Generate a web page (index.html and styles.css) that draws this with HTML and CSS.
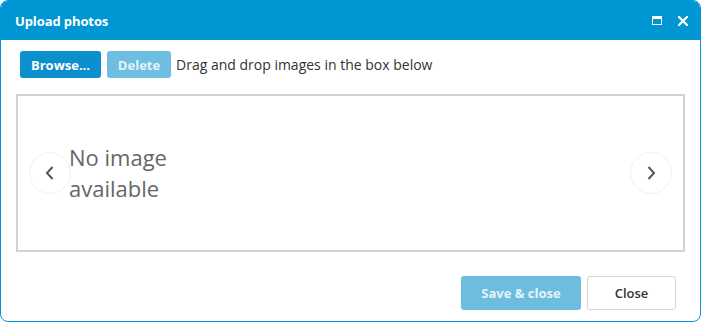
FILE: index.html
```html
<!DOCTYPE html>
<html lang="en">
<head>
    <meta charset="UTF-8">
    <title>Upload photos</title>
    <link rel="stylesheet" href="styles.css">
</head>
<body>
    <div class="dialog">
        <div class="dialog-header">
            <span class="dialog-title">Upload photos</span>
            <div class="dialog-actions">
                <span class="icon-max"></span>
                <svg class="icon-close" width="10" height="10" viewBox="0 0 10 10">
                    <path d="M1 1 L9 9 M9 1 L1 9" stroke="#fff" stroke-width="2.2" stroke-linecap="square"/>
                </svg>
            </div>
        </div>

        <div class="toolbar">
            <button class="btn btn-primary">Browse...</button>
            <button class="btn btn-disabled">Delete</button>
            <span class="hint">Drag and drop images in the box below</span>
        </div>

        <div class="dropzone">
            <div class="nav-circle">
                <svg width="12" height="16" viewBox="0 0 12 16">
                    <path d="M8.5 2 L3 8 L8.5 14" fill="none" stroke="#555" stroke-width="2"/>
                </svg>
            </div>
            <div class="no-image">No image<br>available</div>
            <div class="nav-circle">
                <svg width="12" height="16" viewBox="0 0 12 16">
                    <path d="M3.5 2 L9 8 L3.5 14" fill="none" stroke="#555" stroke-width="2"/>
                </svg>
            </div>
        </div>

        <div class="footer">
            <button class="btn btn-save">Save &amp; close</button>
            <button class="btn btn-close">Close</button>
        </div>
    </div>
</body>
</html>
```

FILE: styles.css
```css
body {
    margin: 0;
    font-family: "Open Sans", Arial, sans-serif;
    background: #fff;
}

.dialog {
    box-sizing: border-box;
    width: 701px;
    height: 322px;
    border: 1px solid #0095d3;
    border-radius: 8px;
    overflow: hidden;
    display: flex;
    flex-direction: column;
}

.dialog-header {
    height: 39px;
    background: #0095d3;
    color: #fff;
    display: flex;
    align-items: center;
    justify-content: space-between;
    padding: 0 12px 0 14px;
}

.dialog-title {
    font-size: 13px;
    font-weight: 700;
    letter-spacing: -0.1px;
}

.dialog-actions {
    display: flex;
    align-items: center;
    gap: 16px;
}

.icon-max {
    box-sizing: border-box;
    width: 10px;
    height: 9px;
    border: 1.5px solid #fff;
    border-top-width: 3px;
}

.toolbar {
    display: flex;
    align-items: center;
    gap: 6px;
    padding: 11px 0 0 19px;
}

.btn {
    font-family: "Open Sans", Arial, sans-serif;
    font-size: 13px;
    font-weight: 700;
    border: none;
    border-radius: 3px;
    padding: 0;
    height: 27px;
    cursor: pointer;
}

.btn-primary {
    width: 81px;
    background: #0b8fcd;
    color: #fff;
}

.btn-disabled {
    width: 64px;
    background: #6ebee1;
    color: #e4f3fa;
}

.hint {
    font-size: 14px;
    color: #333;
    margin-left: -1px;
}

.dropzone {
    height: 158px;
    box-sizing: border-box;
    margin: 16px 15px 0 15px;
    border: 2px solid #d2d2d2;
    display: flex;
    align-items: center;
    padding: 0 11px;
}

.nav-circle {
    width: 42px;
    height: 42px;
    box-sizing: border-box;
    border: 1px solid #f1f1f1;
    border-radius: 50%;
    display: flex;
    align-items: center;
    justify-content: center;
}

.no-image {
    flex: 1;
    font-size: 22px;
    line-height: 31px;
    color: #666;
    margin-left: -2px;
}

.footer {
    display: flex;
    justify-content: flex-end;
    gap: 6px;
    padding: 24px 24px 0 0;
}

.btn-save {
    height: 34px;
    width: 120px;
    background: #6dbddf;
    color: #e5f4fb;
}

.btn-close {
    height: 34px;
    width: 89px;
    background: #fff;
    color: #333;
    font-weight: 600;
    border: 1px solid #d3d3d3;
}
```
